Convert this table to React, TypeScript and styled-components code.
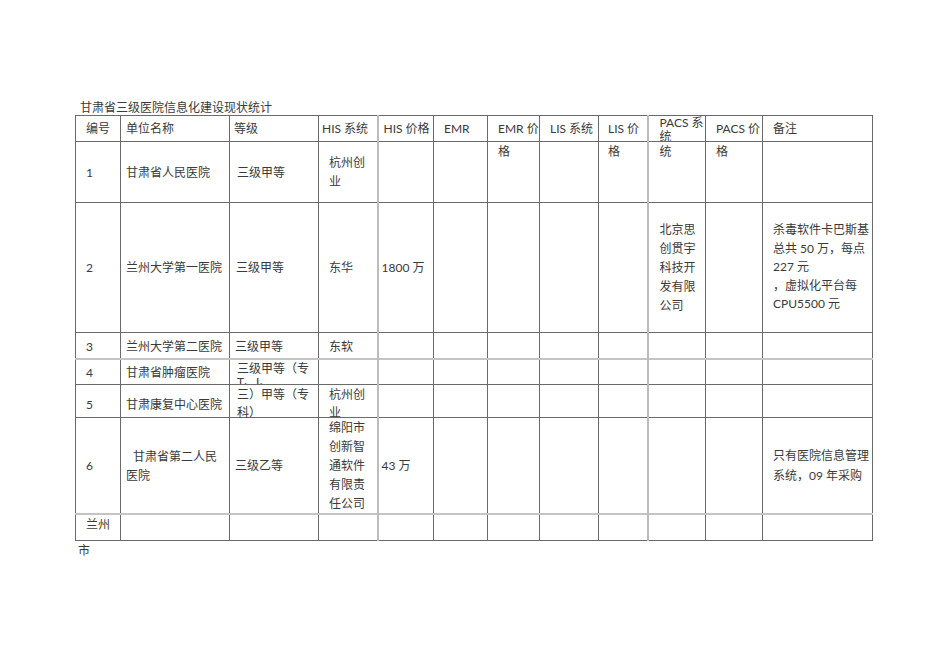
import React from "react";
import styled, { createGlobalStyle } from "styled-components";

const Global = createGlobalStyle`
  html, body { margin: 0; padding: 0; background: #ffffff; }
  body { font-family: Lato, "Noto Sans CJK SC", sans-serif; font-size: 12px; color: #3a3a3a; }
`;

const Page = styled.div`
  width: 950px;
  height: 672px;
  padding-top: 101px;
  box-sizing: border-box;
`;

const Title = styled.div`
  margin-left: 80px;
  height: 14px;
  line-height: 14px;
  white-space: nowrap;
  color: #3a3a3a;
`;

const Table = styled.table`
  margin-left: 75px;
  width: 797px;
  border-collapse: collapse;
  table-layout: fixed;
`;

const Td = styled.td<{ $soft?: boolean; $softTop?: boolean }>`
  border: 1px solid #6a6a6a;
  ${(p) => (p.$soft ? "border-left: 2px solid #bdbdbd;" : "")}
  ${(p) => (p.$softTop ? "border-top: 2px solid #c4c4c4;" : "")}
  padding: 0;
  vertical-align: top;
`;

type Align = "center" | "flex-start" | "flex-end";

const Box = styled.div<{
  $h: number;
  $align: Align;
  $pad: number;
  $clip?: boolean;
  $lh: number;
  $pt: number;
}>`
  height: ${(p) => p.$h}px;
  box-sizing: border-box;
  display: flex;
  flex-direction: column;
  justify-content: ${(p) => p.$align};
  padding-left: ${(p) => p.$pad}px;
  padding-top: ${(p) => p.$pt}px;
  overflow: ${(p) => (p.$clip ? "hidden" : "visible")};
  line-height: ${(p) => p.$lh}px;
  white-space: nowrap;
`;

const Line = styled.span<{ $indent?: number }>`
  display: block;
  padding-left: ${(p) => p.$indent ?? 0}px;
`;

const After = styled.div`
  margin-left: 78px;
  line-height: 19px;
`;

type Cell = {
  lines?: string[];
  pad?: number;
  align?: Align;
  clip?: boolean;
  lh?: number;
  indent?: number;
  pt?: number;
};

type Row = { h: number; align: Align; pt?: number; softTop?: boolean; cells: Cell[] };

const cols = [45, 109, 89, 59, 56, 54, 52, 59, 49, 58, 57, 110];
const basePad = [10, 5, 5, 10, 3, 10, 10, 10, 9, 11, 10, 10];
const softCols = new Set([4, 9]);

const empty = (n: number): Cell[] => Array.from({ length: n }, () => ({}));

const rows: Row[] = [
  {
    h: 26,
    align: "center",
    cells: [
      { lines: ["编号"] },
      { lines: ["单位名称"] },
      { lines: ["等级"], pad: 4 },
      { lines: ["HIS 系统"], pad: 3 },
      { lines: ["HIS 价格"], pad: 5 },
      { lines: ["EMR"] },
      { lines: ["EMR 价"] },
      { lines: ["LIS 系统"] },
      { lines: ["LIS 价"] },
      { lines: ["PACS 系", "统"], align: "flex-start", clip: true, lh: 14 },
      { lines: ["PACS 价"] },
      { lines: ["备注"] },
    ],
  },
  {
    h: 61,
    align: "center",
    cells: [
      { lines: ["1"] },
      { lines: ["甘肃省人民医院"] },
      { lines: ["三级甲等"], pad: 7 },
      { lines: ["杭州创", "业"] },
      {},
      {},
      { lines: ["格"], align: "flex-start" },
      {},
      { lines: ["格"], align: "flex-start" },
      { lines: ["统"], align: "flex-start" },
      { lines: ["格"], align: "flex-start" },
      {},
    ],
  },
  {
    h: 130,
    align: "center",
    cells: [
      { lines: ["2"] },
      { lines: ["兰州大学第一医院"] },
      { lines: ["三级甲等"], pad: 6 },
      { lines: ["东华"] },
      { lines: ["1800 万"] },
      {},
      {},
      {},
      {},
      { lines: ["北京思", "创贯宇", "科技开", "发有限", "公司"], lh: 19 },
      {},
      {
        lines: ["杀毒软件卡巴斯基", "总共 50 万，每点", "227 元", "，虚拟化平台每", "CPU5500 元"],
        lh: 18.5,
      },
    ],
  },
  {
    h: 26,
    align: "center",
    pt: 2,
    cells: [
      { lines: ["3"] },
      { lines: ["兰州大学第二医院"] },
      { lines: ["三级甲等"] },
      { lines: ["东软"] },
      ...empty(8),
    ],
  },
  {
    h: 25,
    align: "center",
    pt: 1,
    softTop: true,
    cells: [
      { lines: ["4"] },
      { lines: ["甘肃省肿瘤医院"] },
      { lines: ["三级甲等（专", "T、I、"], lh: 13, clip: true, pad: 7, align: "flex-start", pt: 2 },
      ...empty(9),
    ],
  },
  {
    h: 33,
    align: "center",
    pt: 6,
    cells: [
      { lines: ["5"] },
      { lines: ["甘肃康复中心医院"] },
      { lines: ["三）甲等（专", "科）"], lh: 18, pad: 7 },
      { lines: ["杭州创", "业"], lh: 18 },
      ...empty(8),
    ],
  },
  {
    h: 96,
    align: "center",
    cells: [
      { lines: ["6"] },
      { lines: ["甘肃省第二人民", "医院"], indent: 7 },
      { lines: ["三级乙等"] },
      { lines: ["绵阳市", "创新智", "通软件", "有限责", "任公司"] },
      { lines: ["43 万"] },
      ...empty(6),
      { lines: ["只有医院信息管理", "系统，09 年采购"], lh: 19.5 },
    ],
  },
  {
    h: 26,
    align: "flex-start",
    softTop: true,
    cells: [{ lines: ["兰州"] }, ...empty(11)],
  },
];

export default function App() {
  return (
    <>
      <Global />
      <Page>
        <Title>甘肃省三级医院信息化建设现状统计</Title>
        <Table>
          <colgroup>
            {cols.map((w, i) => (
              <col key={i} style={{ width: w }} />
            ))}
          </colgroup>
          <tbody>
            {rows.map((row, ri) => (
              <tr key={ri}>
                {row.cells.map((c, ci) => (
                  <Td key={ci} $soft={softCols.has(ci)} $softTop={row.softTop}>
                    <Box
                      $h={row.h - 1}
                      $align={c.align ?? row.align}
                      $pad={c.pad ?? basePad[ci]}
                      $clip={c.clip}
                      $lh={c.lh ?? 19}
                      $pt={c.pt ?? (c.align ? 0 : row.pt ?? 0)}
                    >
                      {(c.lines ?? []).map((l, li) => (
                        <Line key={li} $indent={li === 0 ? c.indent : 0}>
                          {l}
                        </Line>
                      ))}
                    </Box>
                  </Td>
                ))}
              </tr>
            ))}
          </tbody>
        </Table>
        <After>市</After>
      </Page>
    </>
  );
}
